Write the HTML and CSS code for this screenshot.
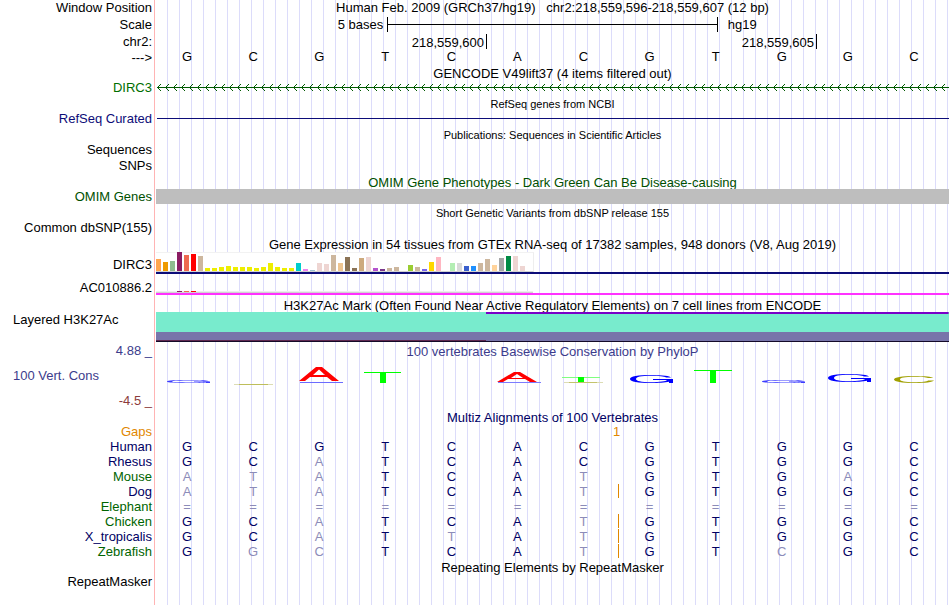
FILE: index.html
```html
<!DOCTYPE html>
<html lang="en">
<head>
<meta charset="utf-8">
<title>chr2:218,559,596-218,559,607</title>
<link rel="stylesheet" href="styles.css">
</head>
<body>
<main class="browser">
  <div class="track track-16">
    <span class="label">Window Position</span>
    <h1 class="title heading">Human Feb. 2009 (GRCh37/hg19) &nbsp; chr2:218,559,596-218,559,607 (12 bp)</h1>
  </div>
  <div class="track track-18">
    <span class="label">Scale</span>
    <div class="scale"><span class="scale-from">5 bases</span><span class="scale-bar"></span><span class="scale-to">hg19</span></div>
  </div>
  <div class="track track-16">
    <span class="label">chr2:</span>
    <div class="ruler"><span class="tick">218,559,600</span><span class="tick">218,559,605</span></div>
  </div>
  <div class="track">
    <span class="label">---&gt;</span>
    <div class="bases" data-bases="GCGTCACGTGGC"></div>
  </div>

  <div class="track"><h2 class="title">GENCODE V49lift37 (4 items filtered out)</h2></div>
  <div class="track">
    <span class="label gene">DIRC3</span>
    <svg class="intron" width="100%" height="15" aria-hidden="true">
      <defs>
        <pattern id="chevron" width="8" height="15" patternUnits="userSpaceOnUse">
          <path d="M1 7h1v1h-1zM2 6h1v3h-1zM3 5h1v1h-1zM3 9h1v1h-1zM4 4h1v1h-1zM4 10h1v1h-1z" fill="#005a00" shape-rendering="crispEdges"/>
        </pattern>
      </defs>
      <rect width="100%" height="15" fill="url(#chevron)"/>
      <rect x="1" y="7" width="100%" height="1" fill="#005a00"/>
    </svg>
  </div>

  <div class="track track-16"><h2 class="title small">RefSeq genes from NCBI</h2></div>
  <div class="track">
    <span class="label navy">RefSeq Curated</span>
    <div class="refseq-line"></div>
  </div>

  <div class="track track-16"><h2 class="title small">Publications: Sequences in Scientific Articles</h2></div>
  <div class="track track-16"><span class="label">Sequences</span></div>
  <div class="track track-16"><span class="label">SNPs</span></div>

  <div class="track"><h2 class="title green">OMIM Gene Phenotypes - Dark Green Can Be Disease-causing</h2></div>
  <div class="track">
    <span class="label green">OMIM Genes</span>
    <div class="omim-bar"></div>
  </div>

  <div class="track track-16"><h2 class="title small">Short Genetic Variants from dbSNP release 155</h2></div>
  <div class="track"><span class="label">Common dbSNP(155)</span></div>

  <div class="track track-17"><h2 class="title">Gene Expression in 54 tissues from GTEx RNA-seq of 17382 samples, 948 donors (V8, Aug 2019)</h2></div>
  <div class="track gtex-high">
    <span class="label">DIRC3</span>
    <div class="gtex coding"><div class="plot" id="dirc3"></div></div>
  </div>
  <div class="track gtex-low">
    <span class="label">AC010886.2</span>
    <div class="gtex noncoding"><div class="plot" id="ac010886"></div></div>
  </div>

  <div class="track"><h2 class="title">H3K27Ac Mark (Often Found Near Active Regulatory Elements) on 7 cell lines from ENCODE</h2></div>
  <div class="track layered">
    <span class="label start">Layered H3K27Ac</span>
    <div class="signal"><div class="signal-top"></div><div class="signal-mid"></div><div class="signal-low"></div></div>
  </div>

  <div class="track track-18">
    <span class="label max">4.88 _</span>
    <h2 class="title max">100 vertebrates Basewise Conservation by PhyloP</h2>
  </div>
  <div class="track conservation">
    <span class="label start max">100 Vert. Cons</span>
    <div class="logos" aria-hidden="true">
      <svg viewBox="0 0 66 32"><path fill="#3c3cff" fill-rule="evenodd" d="M11 21.500C11 20.300 20 20 33 20S52 20.300 53 21.200H48C44 20.700 40 20.600 33 20.600S16 20.900 16 21.500S24 22.400 33 22.400S46 22.200 48 21.900H38V21.500H54V23H50V22.500C46 23 40 23 33 23C20 23 11 22.700 11 21.500Z"/></svg>
      <svg viewBox="0 0 66 32"><path d="M12 24.500H51" stroke="#dcdcb4"/><path d="M17 24.500H46" stroke="#a0a000" stroke-width=".5"/></svg>
      <svg viewBox="0 0 66 32"><path d="M12 22.500H55" stroke="#6c6cff"/><path fill="#f00" fill-rule="evenodd" d="M11 21L28 7H34L51 21H44L39 17H22L17 21ZM25 15H37L31 9.500Z"/></svg>
      <svg viewBox="0 0 66 32"><rect x="10" y="12" width="37" height="1" fill="#0f0"/><rect x="26" y="12" width="6" height="11" fill="#0f0"/></svg>
      <svg viewBox="0 0 66 32"></svg>
      <svg viewBox="0 0 66 32"><path d="M12 22.500H55" stroke="#7c7cff"/><path fill="#f00" fill-rule="evenodd" d="M11 22L28 12H34L51 22H44L39 19H22L17 22ZM25 18H37L31 14Z"/></svg>
      <svg viewBox="0 0 66 32"><rect x="10" y="17" width="38" height="1" fill="#80ff80"/><rect x="26" y="17" width="6" height="5" fill="#0f0"/><path d="M12 22.500H51" stroke="#dcdcb4"/><path d="M17 22.500H45" stroke="#a0a000" stroke-width=".4"/></svg>
      <svg viewBox="0 0 66 32"><path fill="#00f" fill-rule="evenodd" d="M12 19C12 16.400 20 15 33 15C45 15 52 16 53 17.500H48C46 16.400 41 15.800 33 15.800C23 15.800 18 17 18 19S23 22.200 33 22.200C42 22.200 48 21.400 49 20H35V19H55V23H51V21.800C47 22.700 40 23 33 23C20 23 12 21.600 12 19Z"/></svg>
      <svg viewBox="0 0 66 32"><rect x="10" y="10" width="38" height="1" fill="#0f0"/><rect x="26" y="10" width="6" height="13" fill="#0f0"/></svg>
      <svg viewBox="0 0 66 32"><path fill="#3c3cff" fill-rule="evenodd" d="M12 21.500C12 20.300 21 20 34 20S53 20.300 54 21.200H49C45 20.700 41 20.600 34 20.600S17 20.900 17 21.500S25 22.400 34 22.400S47 22.200 49 21.900H39V21.500H55V23H51V22.500C47 23 41 23 34 23C21 23 12 22.700 12 21.500Z"/></svg>
      <svg viewBox="0 0 66 32"><path fill="#00f" fill-rule="evenodd" d="M12 18C12 15.400 20 14 33 14C45 14 52 15 53 16.500H48C46 15.400 41 14.800 33 14.800C23 14.800 18 16 18 18S23 21.200 33 21.200C42 21.200 48 20.400 49 19H35V18H55V22H51V20.800C47 21.700 40 22 33 22C20 22 12 20.600 12 18Z"/></svg>
      <svg viewBox="0 0 66 32"><path fill="#a0a000" d="M12 19.500C12 17.300 20 16 32 16C43 16 50 16.700 51 18H46C44 17.200 39 16.800 32 16.800C23 16.800 18 17.800 18 19.500S23 22.200 32 22.200C40 22.200 45 21.600 46 20.500H52C51 22.200 43 23 32 23C20 23 12 21.700 12 19.500Z"/></svg>
    </div>
  </div>
  <div class="track track-18"><span class="label min">-4.5 _</span></div>

  <div class="track track-14"><h2 class="title deep">Multiz Alignments of 100 Vertebrates</h2></div>
  <table class="alignment">
    <colgroup><col class="label-col"><col span="12"></colgroup>
    <tbody id="alignment">
      <tr class="gaps"><th scope="row">Gaps</th><td colspan="6"></td><td colspan="2">1</td><td colspan="4"></td></tr>
    </tbody>
  </table>

  <div class="track"><h2 class="title">Repeating Elements by RepeatMasker</h2></div>
  <div class="track"><span class="label">RepeatMasker</span></div>
</main>
<script src="script.js"></script>
</body>
</html>
```
FILE: styles.css
```css
* { box-sizing: border-box; }

body {
  margin: 0;
  background: #fff;
  color: #000;
  font: 13px/15px "Liberation Sans", Arial, sans-serif;
}

/* Pink edge beside the labels and a guide line every 12px */
.browser {
  --label-width: 156px;
  min-height: 100vh;
  margin-right: 1px;
  background:
    linear-gradient(#ffb4b4, #ffb4b4) 154px 0 / 1px 100% no-repeat,
    linear-gradient(#fff, #fff) 0 0 / 156px 100% no-repeat,
    repeating-linear-gradient(90deg, transparent 0 11px, #dcdcfa 11px 12px);
}

.track {
  display: grid;
  grid-template-columns: var(--label-width) minmax(0, 1fr);
  height: 15px;
}
.track-14 { height: 14px; }
.track-16 { height: 16px; line-height: 16px; }
.track-17 { height: 17px; line-height: 17px; }
.track-18 { height: 18px; line-height: 18px; }

.label {
  grid-column: 1;
  padding-right: 4px;
  text-align: right;
  white-space: nowrap;
}
.label.start { padding-left: 13px; text-align: left; }

.title {
  grid-column: 2;
  margin: 0;
  padding-top: 1px;
  font-size: 13px;
  font-weight: 400;
  text-align: center;
  white-space: nowrap;
}
.title.small { font-size: 11px; }
.title.heading { padding-top: 0; }

.gene { color: #006e00; }
.navy { color: #0c0c78; }
.green { color: #005000; }
.deep { color: #000064; padding-top: 0; }
.max { color: #3c3c8c; }
.min { color: #8c3c3c; }

.scale {
  display: grid;
  grid-template-columns: 7fr 10fr 7fr;
  padding-top: 1px;
  line-height: 15px;
}
.scale-from { padding-right: 4px; text-align: right; }
.scale-bar {
  height: 15px;
  border: solid #000;
  border-width: 0 1px;
  background: linear-gradient(#000, #000) 0 7px / 100% 1px no-repeat;
}
.scale-to { padding-left: 10px; }

.ruler {
  display: grid;
  grid-template-columns: 5fr 5fr 2fr;
  padding-left: 1px;
}
.tick {
  height: 15px;
  padding-right: 2px;
  border-right: 1px solid #000;
  line-height: 17px;
  text-align: right;
}

.bases { display: grid; grid-template-columns: repeat(12, 1fr); line-height: 13px; }
.bases span { padding-right: 4px; text-align: center; }

.intron { display: block; }
.refseq-line { height: 1px; margin: 7px 0 0 1px; background: #0c0c78; }
.omim-bar { background: #bebebe; }

.gtex-high { height: 23px; line-height: 25px; }
.gtex-low { height: 22px; line-height: 25px; }
.gtex { display: flex; align-items: flex-start; }
.coding { height: 22px; border-bottom: 2px solid #0c0c78; }
.noncoding { height: 20px; border-bottom: 2px solid #ff32ff; align-items: flex-end; }
.plot {
  display: flex;
  align-items: flex-end;
  gap: 2px;
  height: 20px;
  padding-right: 1px;
  border-bottom: 1px solid #d2d2d2;
  background: #fff;
}
.coding .plot { border-right: 1px solid #eee; border-top: 1px solid #f2f2f2; }
.noncoding .plot { height: 2px; background: #eee; }
.plot span { width: 5px; }

.layered { height: 30px; line-height: 16px; }
.signal { display: flex; flex-direction: column; border-bottom: 1px solid #140a28; }
.signal-top {
  height: 20px;
  background: linear-gradient(#7800c8, #7800c8) 100% 0 / 58.3333% 2px no-repeat #78ebcd;
}
.signal-mid { height: 8px; background: #7875aa; }
.signal-low { height: 1px; background: linear-gradient(90deg, #5f2850 41.6667%, #7875aa 41.6667%); }

.conservation { height: 32px; line-height: 32px; }
.logos { display: flex; justify-content: space-between; padding-right: 1px; }
.logos svg { display: block; width: 66px; height: 32px; }

.alignment {
  width: 100%;
  border-spacing: 0;
  table-layout: fixed;
  color: #000064;
}
.label-col { width: var(--label-width); }
.alignment tr { height: 15px; }
.alignment th, .alignment td { padding: 0 4px 0 0; font-weight: 400; }
.alignment th { text-align: right; }
.alignment td { text-align: center; }
.alignment td.mismatch { color: #8c8cb9; }
.alignment tr.alt th { color: #006400; }
.alignment td.insert {
  background: linear-gradient(#e18700, #e18700) 100% 0 / 1px 14px no-repeat;
}
.alignment tr.gaps { color: #e18700; }
```
FILE: script.js
```js
// Tissue bars: [height in px, colour]
const yellow = "#eeee00", tan = "#cdb79e", rose = "#eed5d2";
const dirc3 = [
  [12, "#ffa54f"], [9, "#ee9a00"], [10, "#8fbc8f"], [19, "#8b1c62"], [16, "#ee6a50"],
  [17, "#ff0000"], [15, tan], [3, yellow], [3, yellow], [4, yellow], [5, yellow],
  [4, yellow], [4, yellow], [4, yellow], [3, yellow], [4, yellow], [8, yellow],
  [4, yellow], [3, yellow], [3, yellow], [8, "#00cdcd"], [2, "#ee82ee"], [1, "#9ac0cd"],
  [8, rose], [7, rose], [16, tan], [8, "#eec591"], [14, "#8b7355"], [3, "#8b7355"],
  [13, "#cdaa7d"], [14, rose], [3, "#b452cd"], [2, "#7a378b"], [3, tan], [4, tan],
  [0, tan], [6, "#9acd32"], [4, tan], [2, "#7a67ee"], [9, "#ffd700"], [14, "#ffb6c1"],
  [0, tan], [8, "#b4eeb4"], [8, "#d9d9d9"], [5, "#3a5fcd"], [5, "#1e90ff"], [8, tan],
  [12, tan], [6, "#ffd39b"], [13, "#a6a6a6"], [15, "#008b45"], [15, rose], [5, rose],
  [0, rose]
];
const ac010886 = dirc3.map(([, colour], i) => [i >= 3 && i <= 5 ? 1 : 0, colour]);

function drawBars(id, bars) {
  const plot = document.getElementById(id);
  for (const [height, colour] of bars) {
    const bar = document.createElement("span");
    bar.style.height = height + "px";
    bar.style.background = colour;
    plot.append(bar);
  }
}
drawBars("dirc3", dirc3);
drawBars("ac010886", ac010886);

const strip = document.querySelector(".bases");
for (const base of strip.dataset.bases) {
  const cell = document.createElement("span");
  cell.textContent = base;
  strip.append(cell);
}

// Species rows: lower case is a base that differs from human
const species = [
  ["Human", "GCGTCACGTGGC"],
  ["Rhesus", "GCaTCACGTGGC"],
  ["Mouse", "ataTCAtGTGaC", "alt"],
  ["Dog", "ataTCAtGTGGC", "", true],
  ["Elephant", "============", "alt"],
  ["Chicken", "GCaTCAtGTGGC", "alt", true],
  ["X_tropicalis", "GCaTtAtGTGGC", "", true],
  ["Zebrafish", "GgcTCAtGTcGC", "alt", true]
];
const body = document.getElementById("alignment");
for (const [name, bases, kind, insert] of species) {
  const row = body.insertRow();
  row.className = kind || "";
  const head = document.createElement("th");
  head.scope = "row";
  head.textContent = name;
  row.append(head);
  [...bases].forEach((base, i) => {
    const cell = row.insertCell();
    cell.textContent = base.toUpperCase();
    if (base === "=" || base !== base.toUpperCase()) cell.classList.add("mismatch");
    if (insert && i === 6) cell.classList.add("insert");
  });
}
```
